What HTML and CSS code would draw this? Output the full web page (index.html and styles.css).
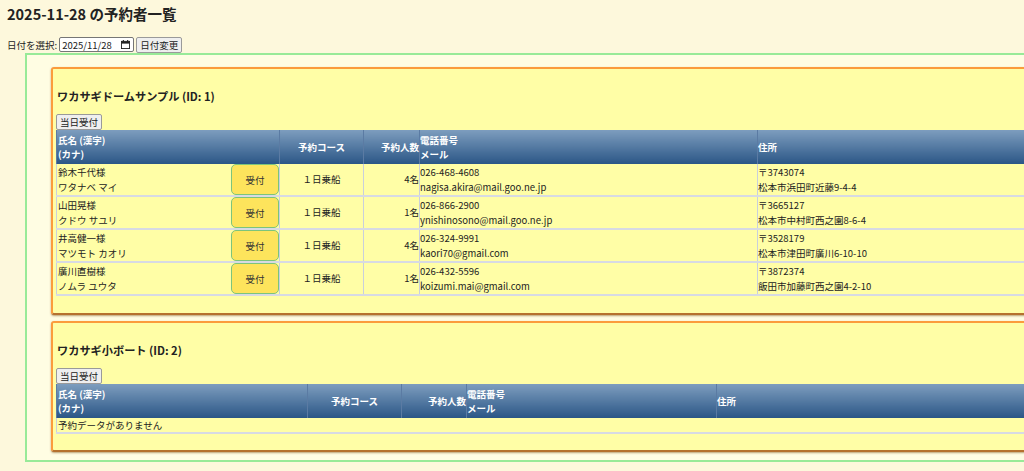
FILE: index.html
```html
<!DOCTYPE html>
<html lang="ja">
<head>
    <meta charset="UTF-8">
    <meta name="viewport" content="width=device-width, initial-scale=1.0">
    <title>予約者一覧</title>
    <link rel="stylesheet" href="styles.css">
</head>
<body>
    <h1>2025-11-28 の予約者一覧</h1>

    <form class="date-form">
        <label for="date">日付を選択:</label>
        <span class="date-input">
            <input type="text" id="date" value="2025/11/28">
            <svg class="cal-icon" width="10" height="10" viewBox="0 0 10 10" aria-hidden="true">
                <rect x="0.5" y="1.5" width="9" height="8" fill="none" stroke="#222"/>
                <rect x="0.5" y="1.5" width="9" height="2.5" fill="#222"/>
                <rect x="2" y="0" width="1.2" height="2" fill="#222"/>
                <rect x="6.8" y="0" width="1.2" height="2" fill="#222"/>
            </svg>
        </span>
        <button type="button">日付変更</button>
    </form>

    <div class="container">
        <div class="boat-card">
            <h3>ワカサギドームサンプル (ID: 1)</h3>
            <button type="button" class="walkin-btn">当日受付</button>
            <table class="reserve-table t-dome">
                <colgroup>
                    <col class="c-name"><col class="c-course"><col class="c-count"><col class="c-contact"><col>
                </colgroup>
                <thead>
                    <tr>
                        <th>氏名 (漢字)<br>(カナ)</th>
                        <th class="center">予約コース</th>
                        <th class="right">予約人数</th>
                        <th class="tight">電話番号<br>メール</th>
                        <th class="tight">住所</th>
                    </tr>
                </thead>
                <tbody>
                    <tr>
                        <td><div class="name-cell"><span>鈴木千代様<br>ワタナベ マイ</span><button type="button" class="accept-btn">受付</button></div></td>
                        <td class="center">１日乗船</td>
                        <td class="right">4名</td>
                        <td class="tight">026-468-4608<br>nagisa.akira@mail.goo.ne.jp</td>
                        <td class="tight">〒3743074<br>松本市浜田町近藤9-4-4</td>
                    </tr>
                    <tr>
                        <td><div class="name-cell"><span>山田晃様<br>クドウ サユリ</span><button type="button" class="accept-btn">受付</button></div></td>
                        <td class="center">１日乗船</td>
                        <td class="right">1名</td>
                        <td class="tight">026-866-2900<br>ynishinosono@mail.goo.ne.jp</td>
                        <td class="tight">〒3665127<br>松本市中村町西之園8-6-4</td>
                    </tr>
                    <tr>
                        <td><div class="name-cell"><span>井高健一様<br>マツモト カオリ</span><button type="button" class="accept-btn">受付</button></div></td>
                        <td class="center">１日乗船</td>
                        <td class="right">4名</td>
                        <td class="tight">026-324-9991<br>kaori70@gmail.com</td>
                        <td class="tight">〒3528179<br>松本市津田町廣川6-10-10</td>
                    </tr>
                    <tr>
                        <td><div class="name-cell"><span>廣川直樹様<br>ノムラ ユウタ</span><button type="button" class="accept-btn">受付</button></div></td>
                        <td class="center">１日乗船</td>
                        <td class="right">1名</td>
                        <td class="tight">026-432-5596<br>koizumi.mai@gmail.com</td>
                        <td class="tight">〒3872374<br>飯田市加藤町西之園4-2-10</td>
                    </tr>
                </tbody>
            </table>
        </div>

        <div class="boat-card">
            <h3>ワカサギ小ボート (ID: 2)</h3>
            <button type="button" class="walkin-btn">当日受付</button>
            <table class="reserve-table t-boat">
                <colgroup>
                    <col class="c-name"><col class="c-course"><col class="c-count"><col class="c-contact"><col>
                </colgroup>
                <thead>
                    <tr>
                        <th>氏名 (漢字)<br>(カナ)</th>
                        <th class="center">予約コース</th>
                        <th class="right">予約人数</th>
                        <th class="tight">電話番号<br>メール</th>
                        <th class="tight">住所</th>
                    </tr>
                </thead>
                <tbody>
                    <tr>
                        <td colspan="5" class="empty">予約データがありません</td>
                    </tr>
                </tbody>
            </table>
        </div>
    </div>
</body>
</html>
```

FILE: styles.css
```css
html, body { overflow: hidden; }
body { margin: 0; padding: 0 7px; background: #fdf8dc; color: #222; font-family: "Noto Sans CJK JP", "Noto Sans", sans-serif; font-size: 9.5px; }

h1 { font-size: 14.5px; line-height: 22px; margin: 3px 0 11px; }

.date-form { display: flex; align-items: center; gap: 2px; height: 17px; }
.date-form label { font-size: 9.5px; }
.date-input { display: inline-flex; align-items: center; width: 75px; height: 15px; box-sizing: border-box; padding: 0 3px 0 2px; border: 1px solid #767676; border-radius: 2px; background: #fff; }
.date-input input { flex: 1; min-width: 0; border: none; padding: 0; outline: none; font-family: inherit; font-size: 9.5px; background: transparent; color: #222; }
.cal-icon { flex: none; width: 9px; height: 9px; }
.date-form button, .walkin-btn { font-family: inherit; font-size: 9.5px; padding: 0 3px; height: 16px; line-height: 14px; border: 1px solid #9a9a9a; border-radius: 2px; background: #efefef; color: #222; }

.container { width: 1160px; margin-left: 18px; border: 2px solid #98ea98; background: #fffde3; padding: 12px 0 8px 24px; }

.boat-card { background: #fffea6; border: 2px solid #fb9c3c; border-bottom-color: #b5712e; border-radius: 3px; padding: 3px 3px 17px; margin-bottom: 6px; box-shadow: 0 1px 2px rgba(120, 70, 10, 0.5); }
.boat-card:last-child { margin-bottom: 0; padding-bottom: 16px; }
.boat-card h3 { font-size: 11.2px; line-height: 16px; margin: 16px 0 10px 1px; }

.reserve-table { width: 100%; table-layout: fixed; border-collapse: collapse; border-left: 1px solid #c9cfdc; }
.reserve-table th { background: linear-gradient(#7d9dbe, #2b5686); color: #fff; font-size: 9.5px; font-weight: bold; text-align: left; line-height: 14px; padding: 3px 1px; border-left: 1px solid #5b7ba3; }
.reserve-table td { line-height: 15px; padding: 0 1px; height: 31px; border-bottom: 2px solid #d7dae3; border-left: 1px solid #c9cfdc; vertical-align: middle; }
.reserve-table .center { text-align: center; }
.reserve-table .right { text-align: right; padding-right: 0; }
.reserve-table .tight { padding-left: 0; }
.reserve-table td.empty { height: 14px; line-height: 14px; }

.t-dome .c-name { width: 223px; }
.t-dome .c-course { width: 84px; }
.t-dome .c-count { width: 56px; }
.t-dome .c-contact { width: 338px; }

.t-boat .c-name { width: 251px; }
.t-boat .c-course { width: 94px; }
.t-boat .c-count { width: 65px; }
.t-boat .c-contact { width: 250px; }

.name-cell { display: flex; justify-content: space-between; align-items: center; }
.accept-btn { width: 48px; height: 31px; font-family: inherit; font-size: 9.5px; color: #333; background: #fde45c; border: 1.5px solid #7cc47c; border-radius: 5px; margin-right: -1px; }
```
